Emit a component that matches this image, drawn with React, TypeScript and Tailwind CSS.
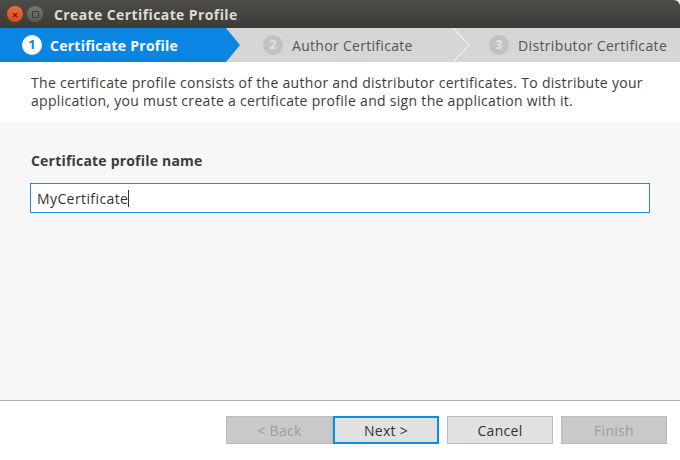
import React from "react";

const font = "font-['Open_Sans','Noto_Sans',sans-serif]";

function StepCircle({ n, active }: { n: number; active?: boolean }) {
  return (
    <span
      className={
        active
          ? "flex h-5 w-5 shrink-0 items-center justify-center rounded-full bg-white text-[13px] font-bold tracking-normal text-[#0a86e2]"
          : "flex h-5 w-5 shrink-0 items-center justify-center rounded-full bg-[#c2c2c2] text-[12px] font-bold tracking-normal text-[#e2e2e2]"
      }
    >
      {n}
    </span>
  );
}

function WizardButton({
  label,
  disabled,
  focused,
  wide,
}: {
  label: string;
  disabled?: boolean;
  focused?: boolean;
  wide?: boolean;
}) {
  let cls = "h-[28px] text-[14px] tracking-[0.3px] ";
  cls += wide ? "w-[107px] " : "w-[106px] ";
  if (disabled) cls += "border border-[#bababa] bg-[#c9c9c9] text-[#9c9c9c]";
  else if (focused) cls += "border-2 border-[#0b8de0] bg-[#e1e1e1] text-[#333]";
  else cls += "border border-[#bdbdbd] bg-[#e1e1e1] text-[#333]";
  return (
    <button className={cls} disabled={disabled}>
      {label}
    </button>
  );
}

export default function App() {
  return (
    <div className={`flex h-[460px] w-[680px] flex-col overflow-hidden bg-white ${font}`}>
      {/* title bar */}
      <div className="flex h-[28px] items-center rounded-tr-[6px] bg-gradient-to-b from-[#4d4c47] to-[#3c3b37] pl-[7px]">
        <span className="flex h-[16px] w-[16px] items-center justify-center rounded-full bg-gradient-to-b from-[#f26b3a] to-[#dd4814] text-[11px] font-bold leading-none text-[#3b2a25]">
          ×
        </span>
        <span className="ml-[4px] flex h-[16px] w-[16px] items-center justify-center rounded-full bg-gradient-to-b from-[#75746f] to-[#5d5c58]">
          <span className="h-[7px] w-[7px] rounded-[1px] border border-[#3c3b37]" />
        </span>
        <span className="ml-[11px] text-[14px] font-bold tracking-[0.4px] text-[#dfdbd2]">
          Create Certificate Profile
        </span>
      </div>

      {/* steps */}
      <div className="flex h-[34px] items-center bg-[#d6d6d6] text-[14px]">
        <div className="flex h-full w-[240px] shrink-0 items-center gap-[8px] bg-[#0a86e2] pl-[22px] [clip-path:polygon(0_0,226px_0,240px_50%,226px_100%,0_100%)]">
          <StepCircle n={1} active />
          <span className="font-bold tracking-[0.25px] text-white">Certificate Profile</span>
        </div>
        <div className="flex h-full w-[212px] shrink-0 items-center gap-[9px] pl-[23px] text-[#555]">
          <StepCircle n={2} />
          <span className="tracking-[0.3px]">Author Certificate</span>
        </div>
        <svg width="18" height="34" viewBox="0 0 18 34" className="shrink-0">
          <path d="M1 0 L17 17 L1 34" fill="none" stroke="#ffffff" strokeWidth="1" />
        </svg>
        <div className="flex h-full items-center gap-[9px] pl-[19px] text-[#555]">
          <StepCircle n={3} />
          <span className="tracking-[0.35px]">Distributor Certificate</span>
        </div>
      </div>

      {/* description */}
      <div className="h-[60px] shrink-0 whitespace-nowrap bg-white px-[31px] pt-[12px] text-[14px] leading-[18px] tracking-[0.3px] text-[#3c3c3c]">
        The certificate profile consists of the author and distributor certificates. To distribute your
        <br />
        application, you must create a certificate profile and sign the application with it.
      </div>

      {/* body */}
      <div className="flex flex-1 flex-col bg-[#f7f7f7] px-[30px] pt-[28px]">
        <label className="pl-[1px] text-[14px] font-bold tracking-[0.2px] text-[#3c3c3c]">
          Certificate profile name
        </label>
        <div className="mt-[12px] flex h-[30px] w-[620px] items-center border border-[#1b8fe6] bg-white pl-[6px] text-[14px] tracking-[0.4px] text-[#333]">
          MyCertificate
          <span className="h-[17px] w-px bg-[#333]" />
        </div>
      </div>

      {/* footer */}
      <div className="flex h-[60px] shrink-0 items-start justify-end border-t border-[#b2b2b2] bg-white pr-[13px] pt-[15px]">
        <WizardButton label="< Back" disabled wide />
        <WizardButton label="Next >" focused />
        <div className="ml-[8px]">
          <WizardButton label="Cancel" />
        </div>
        <div className="ml-[8px]">
          <WizardButton label="Finish" disabled />
        </div>
      </div>
    </div>
  );
}
